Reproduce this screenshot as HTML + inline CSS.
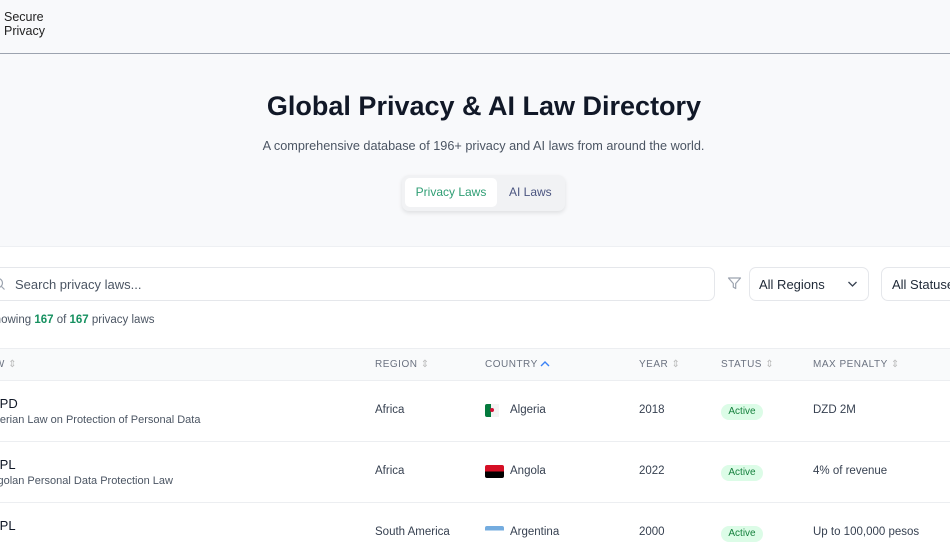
<!DOCTYPE html>
<html><head><meta charset="utf-8"><style>
*{box-sizing:border-box;margin:0;padding:0}
body{width:950px;height:534px;overflow:hidden;background:#fff;font-family:"Liberation Sans",sans-serif;position:relative;color:#111827}
.a{position:absolute;white-space:nowrap}
.top{position:absolute;left:0;top:0;width:950px;height:247px;background:#f8f9fb;border-bottom:1px solid #eef0f3}
.hdr{position:absolute;left:0;top:0;width:950px;height:54px;border-bottom:1px solid #9ca3af;}
.box{position:absolute;border:1px solid #e5e7eb;border-radius:7px;background:#fff}
.th{font-size:10px;color:#6b7280;letter-spacing:.5px;top:359px}
.r1{font-size:11.5px;color:#374151}
.badge{position:absolute;background:#dcfce7;color:#15803d;font-size:10px;border-radius:9px;width:42px;height:16px;line-height:16px;text-align:center}
.line{position:absolute;left:0;width:950px;height:1px;background:#eceef1}
</style></head><body>
<div class="top"></div>
<div class="hdr"></div>
<div class="a" style="left:4px;top:10px;font-size:12.5px;line-height:14px;color:#222">Secure<br>Privacy</div>
<div class="a" style="left:0;width:968px;text-align:center;top:91px;font-size:27px;font-weight:bold;color:#111827">Global Privacy &amp; AI Law Directory</div>
<div class="a" style="left:0;width:967px;text-align:center;top:139px;font-size:12.7px;color:#4b5563">A comprehensive database of 196+ privacy and AI laws from around the world.</div>
<div class="a" style="left:402px;top:175px;width:163px;height:36px;background:#f1f2f4;border-radius:7px;box-shadow:0 2px 4px rgba(0,0,0,.1)"></div>
<div class="a" style="left:405px;top:178px;width:92px;height:29px;background:#fff;border-radius:5px;color:#2f9e74;font-size:12px;text-align:center;line-height:29px">Privacy Laws</div>
<div class="a" style="left:509px;top:185px;font-size:12px;color:#4b5580">AI Laws</div>

<div class="box" style="left:-10px;top:267px;width:725px;height:34px"></div>
<svg class="a" style="left:-6px;top:277px" width="12" height="14"><circle cx="4" cy="6" r="4.5" fill="none" stroke="#9ca3af" stroke-width="1.2"/><path d="M7.5 9.5l3 3" stroke="#9ca3af" stroke-width="1.2"/></svg>
<div class="a" style="left:15px;top:277px;font-size:13px;color:#4b5563">Search privacy laws...</div>
<svg class="a" style="left:727px;top:276px" width="15" height="15"><path d="M1.5 2h12l-4.8 5.5v5l-2.4-1.4V7.5z" fill="none" stroke="#9ca3af" stroke-width="1.2" stroke-linejoin="round"/></svg>
<div class="box" style="left:749px;top:267px;width:120px;height:34px"></div>
<div class="a" style="left:759px;top:277px;font-size:13px;color:#1f2937">All Regions</div>
<svg class="a" style="left:847px;top:280px" width="11" height="8"><path d="M1.5 2l4 4 4-4" fill="none" stroke="#374151" stroke-width="1.3"/></svg>
<div class="box" style="left:881px;top:267px;width:100px;height:34px"></div>
<div class="a" style="left:892px;top:277px;font-size:13px;color:#1f2937">All Statuses</div>
<div class="a" style="left:-13px;top:314px;font-size:11.5px;color:#4b5563">Showing <b style="color:#15905f">167</b> of <b style="color:#15905f">167</b> privacy laws</div>

<div class="a" style="left:0;top:348px;width:950px;height:33px;background:#f9fafb;border-top:1px solid #eceef1;border-bottom:1px solid #eceef1"></div>
<div class="a th" style="left:-18px">LAW <span style="color:#bbb">⇕</span></div>
<div class="a th" style="left:375px">REGION <span style="color:#bbb">⇕</span></div>
<div class="a th" style="left:485px">COUNTRY</div>
<svg class="a" style="left:540px;top:360px" width="10" height="8"><path d="M1 6l4-4 4 4" fill="none" stroke="#3b82f6" stroke-width="1.4"/></svg>
<div class="a th" style="left:639px">YEAR <span style="color:#bbb">⇕</span></div>
<div class="a th" style="left:721px">STATUS <span style="color:#bbb">⇕</span></div>
<div class="a th" style="left:813px">MAX PENALTY <span style="color:#bbb">⇕</span></div>

<div class="a" style="left:-9px;top:396px;font-size:13px">PPD</div>
<div class="a r1" style="left:-16px;top:414px;font-size:11px;color:#4b5563">Algerian Law on Protection of Personal Data</div>
<div class="a r1" style="left:375px;top:404px">Africa</div>
<div class="a" style="left:485px;top:404px;width:10px;height:13px;background:#047a3d;border-radius:2px"></div>
<div class="a" style="left:491px;top:404px;width:8px;height:13px;background:#f3f3f3"></div><div class="a" style="left:490px;top:408px;width:4px;height:4px;border-radius:50%;background:#d21034"></div>
<div class="a r1" style="left:510px;top:404px">Algeria</div>
<div class="a r1" style="left:639px;top:404px">2018</div>
<div class="badge" style="left:721px;top:404px">Active</div>
<div class="a r1" style="left:813px;top:404px">DZD 2M</div>
<div class="line" style="top:441px"></div>

<div class="a" style="left:-9px;top:457px;font-size:13px">APL</div>
<div class="a r1" style="left:-16px;top:475px;font-size:11px;color:#4b5563">Angolan Personal Data Protection Law</div>
<div class="a r1" style="left:375px;top:465px">Africa</div>
<div class="a" style="left:485px;top:465px;width:19px;height:13px;border-radius:2px;background:linear-gradient(#d50f25 50%,#000 50%)"></div>
<div class="a r1" style="left:510px;top:465px">Angola</div>
<div class="a r1" style="left:639px;top:465px">2022</div>
<div class="badge" style="left:721px;top:465px">Active</div>
<div class="a r1" style="left:813px;top:465px">4% of revenue</div>
<div class="line" style="top:502px"></div>

<div class="a" style="left:-9px;top:518px;font-size:13px">PPL</div>
<div class="a r1" style="left:375px;top:526px">South America</div>
<div class="a" style="left:485px;top:526px;width:19px;height:13px;border-radius:2px;background:linear-gradient(#74acdf 33%,#fff 33%)"></div>
<div class="a r1" style="left:510px;top:526px">Argentina</div>
<div class="a r1" style="left:639px;top:526px">2000</div>
<div class="badge" style="left:721px;top:526px">Active</div>
<div class="a r1" style="left:813px;top:526px">Up to 100,000 pesos</div>
</body></html>
